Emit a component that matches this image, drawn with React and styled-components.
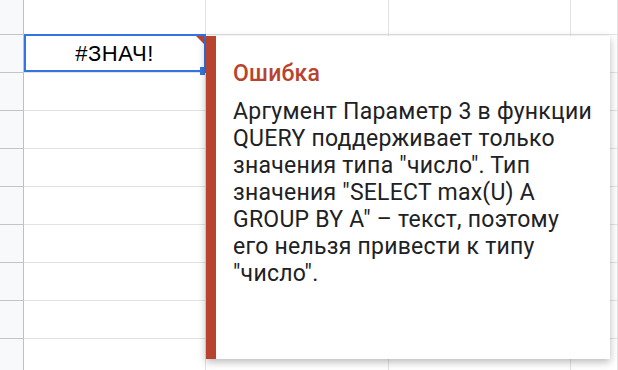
import React from 'react'
import styled, { createGlobalStyle } from 'styled-components'

const Global = createGlobalStyle`
  body {
    margin: 0;
    background: #fff;
    overflow: hidden;
  }
`

const Sheet = styled.div`
  position: relative;
  width: 618px;
  height: 370px;
  overflow: hidden;
  display: grid;
  grid-template-columns: 24px 182px 183px 182px 1fr;
  grid-template-rows: 35px repeat(9, 38px);
  font-family: "Liberation Sans", Arial, sans-serif;
`

const RowHead = styled.div`
  background: #f8f9fa;
  border-right: 1px solid #c0c0c0;
  border-bottom: 1px solid ${p => (p.$last ? 'transparent' : '#c4c4c4')};
`

const Cell = styled.div`
  position: relative;
  border-right: 1px solid #e2e2e2;
  border-bottom: 1px solid #e2e2e2;
  display: flex;
  align-items: center;
  justify-content: center;
  font-size: 22px;
  letter-spacing: 0.6px;
  color: #000;
`

const Selection = styled.div`
  position: absolute;
  top: -1px;
  left: 0;
  right: -1px;
  bottom: 0;
  border: 2px solid #3574e0;
  pointer-events: none;

  &::before {
    content: '';
    position: absolute;
    top: 0;
    right: 0;
    border-style: solid;
    border-width: 0 8px 8px 0;
    border-color: transparent #b8432f transparent transparent;
  }
`

const Handle = styled.div`
  position: absolute;
  right: -2px;
  bottom: -5px;
  width: 6px;
  height: 8px;
  background: #3574e0;
`

const Tooltip = styled.div`
  position: absolute;
  left: 206px;
  top: 36px;
  width: 404px;
  height: 323px;
  box-sizing: border-box;
  background: #fff;
  border-left: 10px solid #b8432f;
  box-shadow: 0 3px 8px rgba(0, 0, 0, 0.28);
  padding: 24px 17px 0 17px;
  font-family: Roboto, "Noto Sans", sans-serif;
  font-size: 23px;
  letter-spacing: 0.25px;
  line-height: 27px;
`

const Title = styled.div`
  color: #b8432f;
  font-weight: 500;
  margin-bottom: 11px;
`

const Message = styled.div`
  color: #202124;
`

const ROWS = 10
const COLS = 4

export default function App() {
  const rows = []
  for (let r = 0; r < ROWS; r++) {
    rows.push(<RowHead key={'h' + r} $last={r === ROWS - 1} />)
    for (let c = 0; c < COLS; c++) {
      const selected = r === 1 && c === 0
      rows.push(
        <Cell key={r + '-' + c}>
          {selected && (
            <>
              #ЗНАЧ!
              <Selection>
                <Handle />
              </Selection>
            </>
          )}
        </Cell>
      )
    }
  }

  return (
    <>
      <Global />
      <Sheet>
        {rows}
        <Tooltip>
          <Title>Ошибка</Title>
          <Message>
            Аргумент Параметр 3 в функции QUERY поддерживает только значения типа
            "число". Тип значения "SELECT max(U) A GROUP BY A" – текст, поэтому его
            нельзя привести к типу "число".
          </Message>
        </Tooltip>
      </Sheet>
    </>
  )
}
